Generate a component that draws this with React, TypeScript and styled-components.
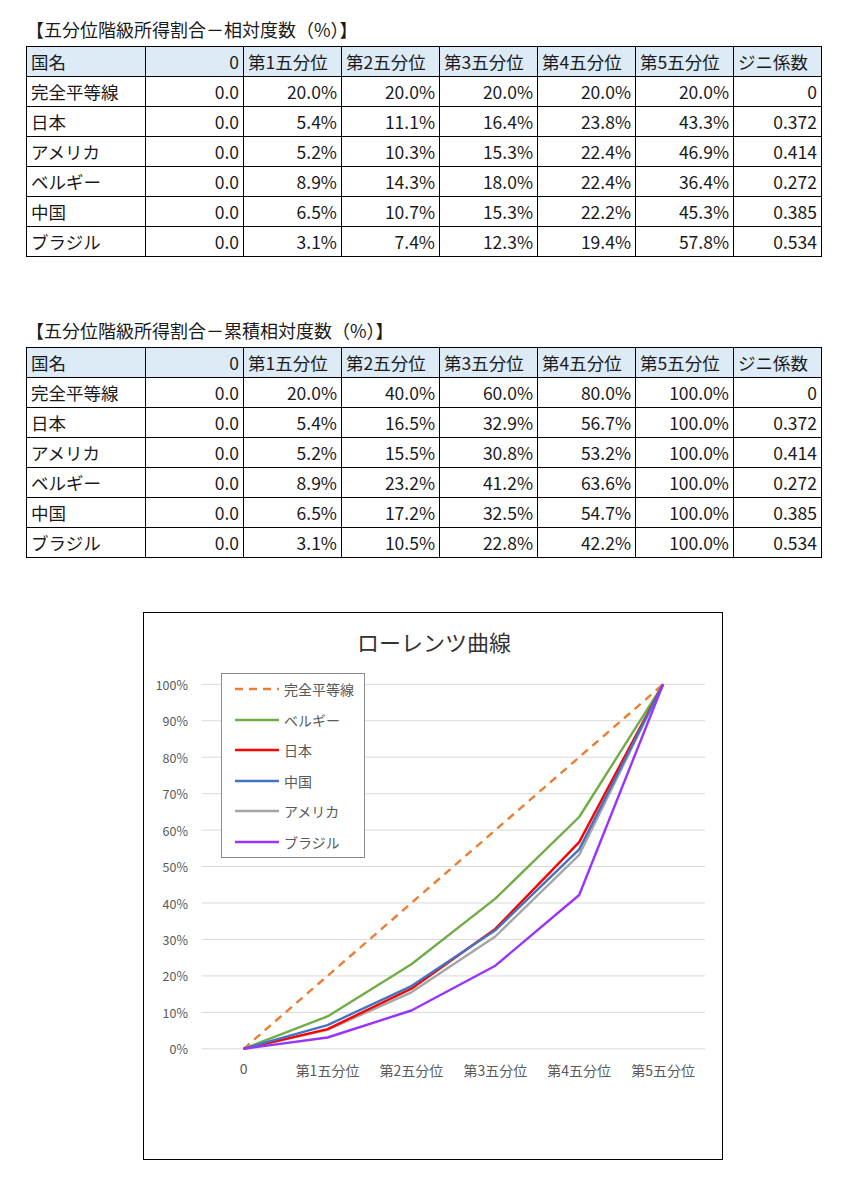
import React from "react";
import styled, { createGlobalStyle } from "styled-components";

const Global = createGlobalStyle`
  html, body { margin: 0; padding: 0; background: #ffffff; }
  body { font-family: "Noto Sans CJK JP", "Noto Sans", sans-serif; color: #1a1a1a; }
`;

const Page = styled.div`
  width: 860px;
  height: 1188px;
  box-sizing: border-box;
  padding: 17px 0 0 26px;
  display: flex;
  flex-direction: column;
`;

const Section = styled.section<{ $gap: number }>`
  margin-top: ${(p) => p.$gap}px;
  display: flex;
  flex-direction: column;
`;

const Title = styled.h2`
  margin: 0 0 5px 0;
  height: 24px;
  line-height: 24px;
  font-size: 18px;
  font-weight: 400;
  color: #1a1a1a;
  white-space: nowrap;
`;

const Table = styled.table`
  border-collapse: collapse;
  table-layout: fixed;
  width: 795px;
  font-size: 17.5px;
  color: #1a1a1a;
`;

const Row = styled.tr<{ $head?: boolean }>`
  height: 30px;
  background: ${(p) => (p.$head ? "#DDEBF7" : "#ffffff")};
`;

const Cell = styled.td<{ $right?: boolean }>`
  border: 1px solid #000;
  padding: 0 4px 0 4px;
  height: 29px;
  line-height: 29px;
  text-align: ${(p) => (p.$right ? "right" : "left")};
  white-space: nowrap;
  overflow: hidden;
`;

const ChartBox = styled.div`
  margin: 54px 0 0 117px;
  width: 580px;
  height: 548px;
  box-sizing: border-box;
  border: 1px solid #000;
  background: #fff;
  position: relative;
`;

const Legend = styled.div`
  position: absolute;
  left: 77px;
  top: 60px;
  width: 144px;
  height: 185px;
  box-sizing: border-box;
  border: 1px solid #8c8c8c;
  background: #fff;
  display: flex;
  flex-direction: column;
  padding: 0 0 0 13px;
`;

const LegendItem = styled.div`
  height: 30.6px;
  display: flex;
  align-items: center;
  gap: 5px;
  font-size: 14px;
  color: #595959;
  white-space: nowrap;
`;

const widths = [119, 98, 98, 98, 98, 98, 98, 88];
const header = ["国名", "0", "第1五分位", "第2五分位", "第3五分位", "第4五分位", "第5五分位", "ジニ係数"];

const rel: string[][] = [
  ["完全平等線", "0.0", "20.0%", "20.0%", "20.0%", "20.0%", "20.0%", "0"],
  ["日本", "0.0", "5.4%", "11.1%", "16.4%", "23.8%", "43.3%", "0.372"],
  ["アメリカ", "0.0", "5.2%", "10.3%", "15.3%", "22.4%", "46.9%", "0.414"],
  ["ベルギー", "0.0", "8.9%", "14.3%", "18.0%", "22.4%", "36.4%", "0.272"],
  ["中国", "0.0", "6.5%", "10.7%", "15.3%", "22.2%", "45.3%", "0.385"],
  ["ブラジル", "0.0", "3.1%", "7.4%", "12.3%", "19.4%", "57.8%", "0.534"],
];

const cum: string[][] = [
  ["完全平等線", "0.0", "20.0%", "40.0%", "60.0%", "80.0%", "100.0%", "0"],
  ["日本", "0.0", "5.4%", "16.5%", "32.9%", "56.7%", "100.0%", "0.372"],
  ["アメリカ", "0.0", "5.2%", "15.5%", "30.8%", "53.2%", "100.0%", "0.414"],
  ["ベルギー", "0.0", "8.9%", "23.2%", "41.2%", "63.6%", "100.0%", "0.272"],
  ["中国", "0.0", "6.5%", "17.2%", "32.5%", "54.7%", "100.0%", "0.385"],
  ["ブラジル", "0.0", "3.1%", "10.5%", "22.8%", "42.2%", "100.0%", "0.534"],
];

const DataTable: React.FC<{ rows: string[][] }> = ({ rows }) => (
  <Table>
    <colgroup>
      {widths.map((w, i) => (
        <col key={i} style={{ width: w }} />
      ))}
    </colgroup>
    <tbody>
      <Row $head>
        {header.map((h, i) => (
          <Cell key={i} $right={i === 1}>
            {h}
          </Cell>
        ))}
      </Row>
      {rows.map((r, ri) => (
        <Row key={ri}>
          {r.map((c, ci) => (
            <Cell key={ci} $right={ci > 0}>
              {c}
            </Cell>
          ))}
        </Row>
      ))}
    </tbody>
  </Table>
);

type Series = { name: string; color: string; dashed?: boolean; data: number[] };

const series: Series[] = [
  { name: "完全平等線", color: "#ED7D31", dashed: true, data: [0, 20, 40, 60, 80, 100] },
  { name: "ベルギー", color: "#70AD47", data: [0, 8.9, 23.2, 41.2, 63.6, 100] },
  { name: "日本", color: "#FF0000", data: [0, 5.4, 16.5, 32.9, 56.7, 100] },
  { name: "中国", color: "#4472C4", data: [0, 6.5, 17.2, 32.5, 54.7, 100] },
  { name: "アメリカ", color: "#A5A5A5", data: [0, 5.2, 15.5, 30.8, 53.2, 100] },
  { name: "ブラジル", color: "#9933FF", data: [0, 3.1, 10.5, 22.8, 42.2, 100] },
];

const drawOrder = ["完全平等線", "ベルギー", "アメリカ", "日本", "中国", "ブラジル"];

const cats = ["0", "第1五分位", "第2五分位", "第3五分位", "第4五分位", "第5五分位"];

const GX0 = 57.7;
const GX1 = 561;
const Y0 = 435.8;
const STEP = 36.45;
const catW = (GX1 - GX0) / 6;
const cx = (i: number) => GX0 + catW * (i + 0.5);
const cy = (v: number) => Y0 - (v / 10) * STEP;

const Lorenz: React.FC = () => (
  <ChartBox>
    <svg width={578} height={546} style={{ display: "block" }}>
      <text
        x={290}
        y={28}
        textAnchor="middle"
        dominantBaseline="central"
        fontSize={22}
        fill="#333"
        fontFamily='"Noto Sans CJK JP", sans-serif'
      >
        ローレンツ曲線
      </text>
      {Array.from({ length: 11 }).map((_, i) => (
        <g key={i}>
          <line x1={GX0} x2={GX1} y1={cy(i * 10)} y2={cy(i * 10)} stroke="#d9d9d9" strokeWidth={1} />
          <text
            x={44}
            y={cy(i * 10)}
            textAnchor="end"
            dominantBaseline="central"
            fontSize={12.5}
            fill="#595959"
            fontFamily='"Noto Sans CJK JP", sans-serif'
          >
            {i * 10}%
          </text>
        </g>
      ))}
      {cats.map((c, i) => (
        <text
          key={c}
          x={cx(i)}
          y={i === 0 ? 455 : 457}
          textAnchor="middle"
          dominantBaseline="central"
          fontSize={14}
          fill="#595959"
          fontFamily='"Noto Sans CJK JP", sans-serif'
        >
          {c}
        </text>
      ))}
      {drawOrder.map((n) => {
        const s = series.find((x) => x.name === n)!;
        const pts = s.data.map((v, i) => `${cx(i).toFixed(1)},${cy(v).toFixed(1)}`).join(" ");
        return (
          <polyline
            key={n}
            points={pts}
            fill="none"
            stroke={s.color}
            strokeWidth={2.4}
            strokeLinejoin="round"
            strokeDasharray={s.dashed ? "8 6" : undefined}
          />
        );
      })}
    </svg>
    <Legend>
      {series.map((s) => (
        <LegendItem key={s.name}>
          <svg width={44} height={4}>
            <line
              x1={0}
              x2={44}
              y1={2}
              y2={2}
              stroke={s.color}
              strokeWidth={2.6}
              strokeDasharray={s.dashed ? "8 6" : undefined}
            />
          </svg>
          {s.name}
        </LegendItem>
      ))}
    </Legend>
  </ChartBox>
);

export default function App() {
  return (
    <Page>
      <Global />
      <Section $gap={0}>
        <Title>【五分位階級所得割合－相対度数（%）】</Title>
        <DataTable rows={rel} />
      </Section>
      <Section $gap={61}>
        <Title>【五分位階級所得割合－累積相対度数（%）】</Title>
        <DataTable rows={cum} />
      </Section>
      <Lorenz />
    </Page>
  );
}
